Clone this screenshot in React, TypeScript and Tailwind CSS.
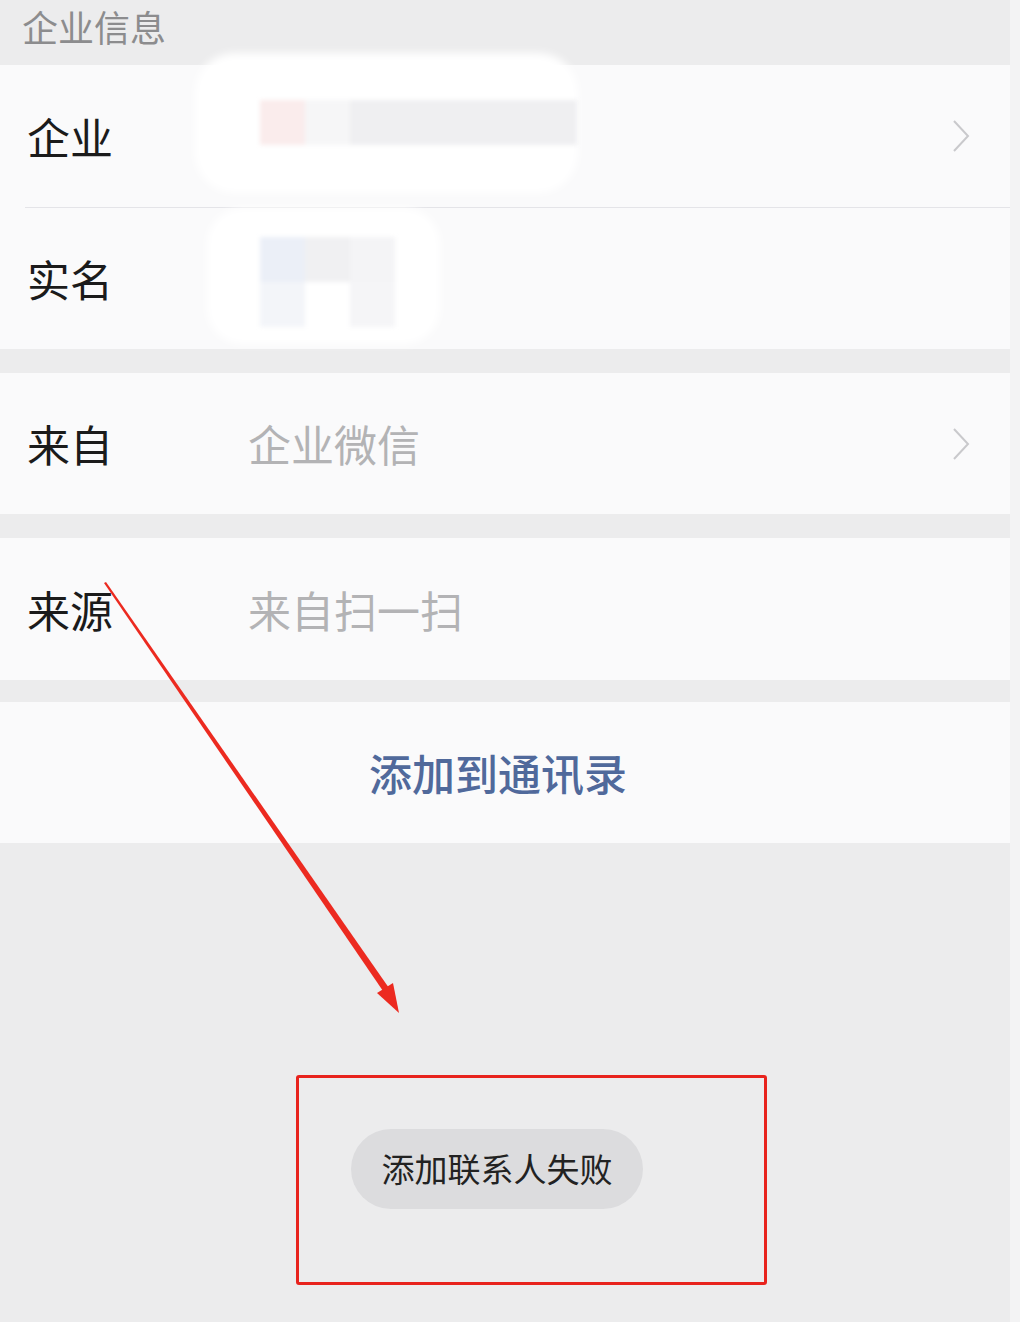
const cjk = { fontFamily: '"Noto Sans CJK SC", "Noto Sans", sans-serif' };

function Chevron() {
  return (
    <svg width="18" height="34" viewBox="0 0 18 34" className="mr-[40px]">
      <path d="M2 2 L16 17 L2 32" fill="none" stroke="#c9c9cc" strokeWidth="2" />
    </svg>
  );
}

function Row({
  label,
  value,
  arrow,
  h = "h-[142px]",
}: {
  label: string;
  value?: string;
  arrow?: boolean;
  h?: string;
}) {
  return (
    <div className={`flex items-center ${h} bg-[#fafafb]`}>
      <div className="w-[248px] pl-[27px] text-[43px] text-[#1b1b1b]">{label}</div>
      <div className="flex-1 text-[43px] text-[#b3b3b5]">{value}</div>
      {arrow && <Chevron />}
    </div>
  );
}

export default function App() {
  return (
    <div className="relative flex w-[1020px] h-[1322px] overflow-hidden bg-[#f3f3f4]" style={cjk}>
      <div className="w-[1010px] h-full bg-[#ececed]">
        <div className="h-[65px] pl-[22px] pt-[2px] text-[36px] leading-[48px] text-[#8c8c8e]">企业信息</div>

        <div className="relative">
          <Row label="企业" arrow />
          <div className="flex bg-[#fafafb]">
            <div className="ml-[25px] flex-1 h-px bg-[#e4e4e8]" />
          </div>
          <Row label="实名" h="h-[141px]" />

          {/* blurred redaction */}
          <div className="absolute left-[195px] top-[-12px] w-[383px] h-[140px] rounded-[40px] bg-white blur-[4px]" />
          <div className="absolute left-[260px] top-[35px] flex blur-[2px]">
            <div className="w-[45px] h-[45px] bg-[#faecec]" />
            <div className="w-[45px] h-[45px] bg-[#f6f6f7]" />
            <div className="w-[227px] h-[45px] bg-[#efeff1]" />
          </div>
          <div className="absolute left-[207px] top-[143px] w-[233px] h-[136px] rounded-[36px] bg-white blur-[4px]" />
          <div className="absolute left-[260px] top-[172px] grid grid-cols-3 blur-[2px]">
            <div className="w-[45px] h-[45px] bg-[#ebeff7]" />
            <div className="w-[45px] h-[45px] bg-[#f0f0f2]" />
            <div className="w-[45px] h-[45px] bg-[#f4f4f6]" />
            <div className="w-[45px] h-[45px] bg-[#f3f5f9]" />
            <div className="w-[45px] h-[45px] bg-white" />
            <div className="w-[45px] h-[45px] bg-[#f5f5f7]" />
          </div>
        </div>

        <div className="h-[24px]" />
        <Row label="来自" value="企业微信" arrow h="h-[141px]" />
        <div className="h-[24px]" />
        <Row label="来源" value="来自扫一扫" />
        <div className="h-[22px]" />
        <div className="flex h-[141px] items-center justify-center pr-[14px] bg-[#fafafb]">
          <span className="text-[43px] font-medium text-[#50699b]">添加到通讯录</span>
        </div>

        <div className="flex pl-[351px] pt-[286px]">
          <div className="flex h-[80px] w-[292px] items-center justify-center rounded-full bg-[#dcdcde] text-[33px] text-[#222]">
            添加联系人失败
          </div>
        </div>
      </div>

      {/* annotations */}
      <div className="absolute left-[296px] top-[1075px] w-[471px] h-[210px] rounded-[3px] border-[3px] border-[#e8231d]" />
      <svg className="absolute left-0 top-0" width="1020" height="1322">
        <polygon points="104,583 106,582 389,988 383,991" fill="#ec2a20" />
        <polygon points="377,993 393,983 399,1013" fill="#ec2a20" />
      </svg>
    </div>
  );
}
